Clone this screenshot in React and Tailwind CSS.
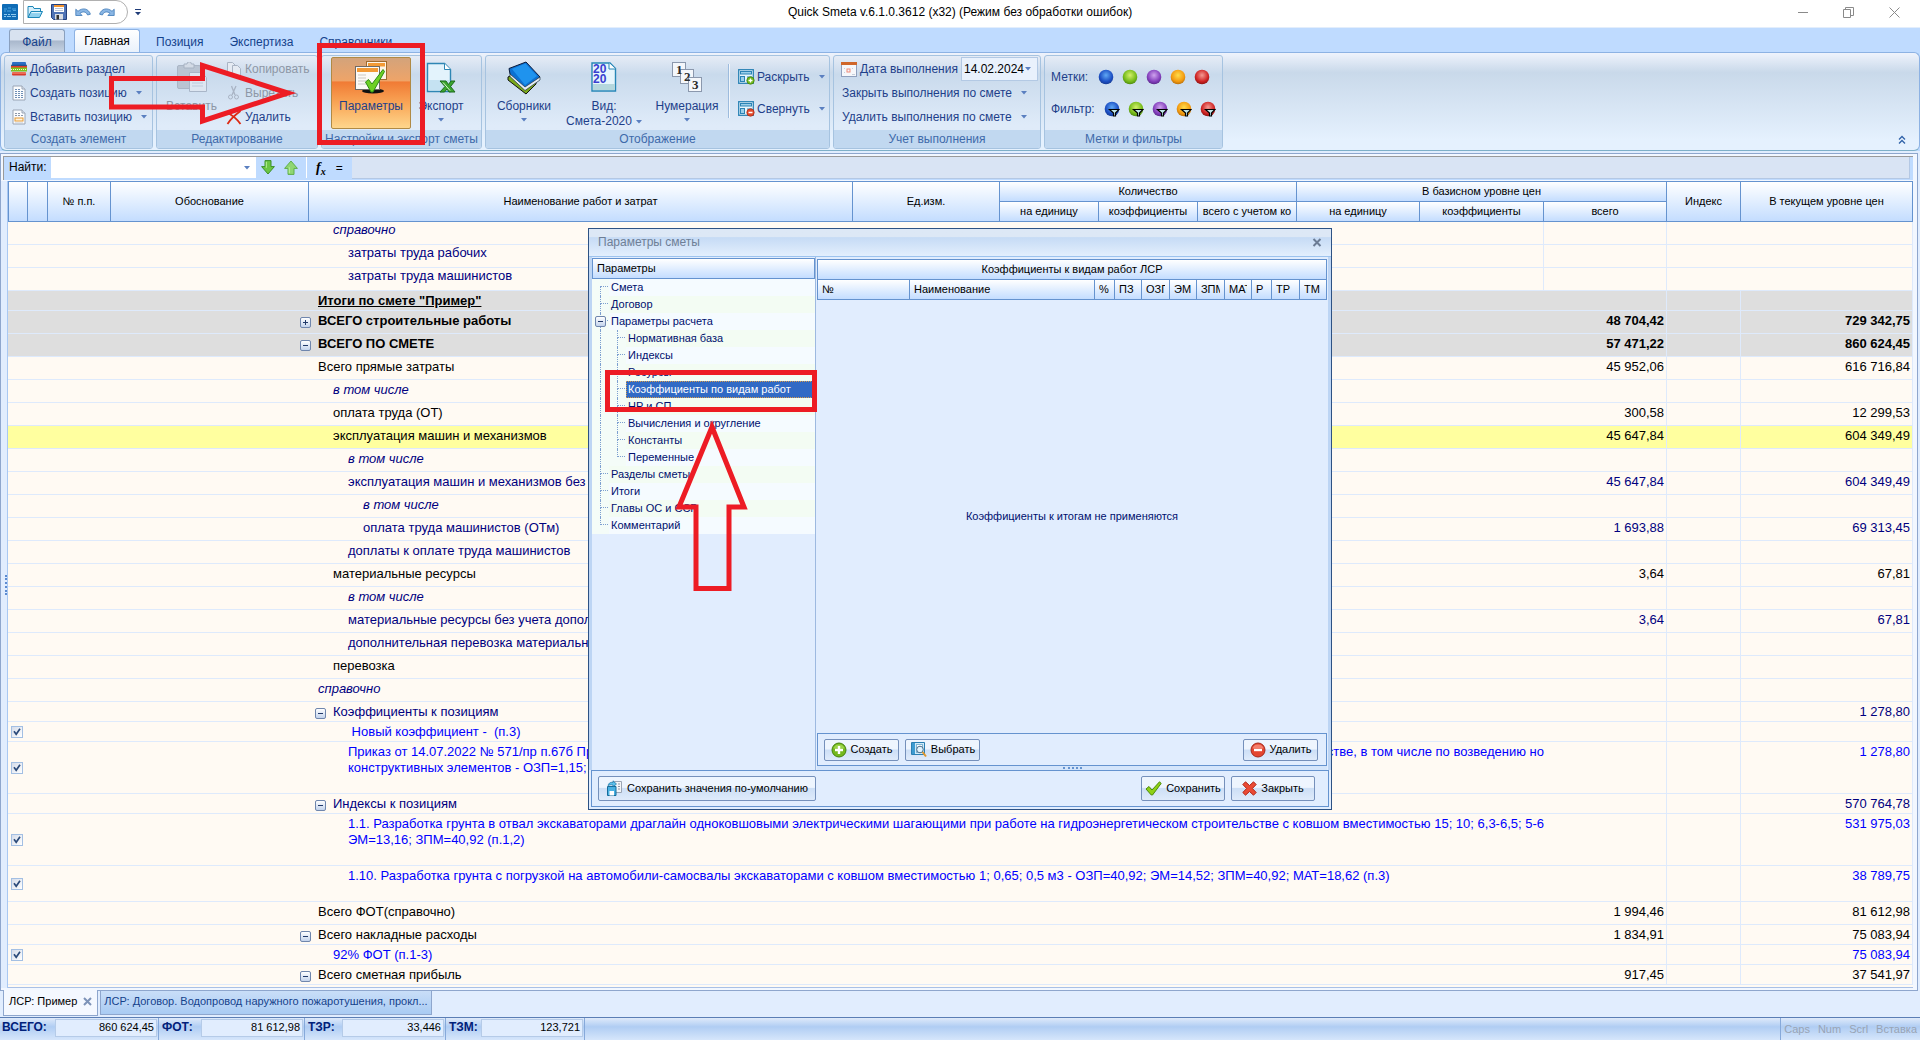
import React from "react";

/* ---------- small shared pieces ---------- */

function Caret({ className = "" }) {
  return (
    <svg width="6" height="4" viewBox="0 0 6 4" className={"shrink-0 " + className} aria-hidden="true">
      <path d="M0 0h6L3 3.4z" fill="#5a7fc0" />
    </svg>
  );
}

function Expander({ open, className = "" }) {
  return (
    <button
      type="button"
      aria-label={open ? "Свернуть строку" : "Развернуть строку"}
      className={"grid size-[11px] shrink-0 place-items-center rounded-[2px] border border-[#6f86ad] bg-linear-to-b from-white to-[#c3d3ec] " + className}
    >
      <svg width="7" height="7" viewBox="0 0 7 7" aria-hidden="true">
        <path d={open ? "M1 3.5h5" : "M1 3.5h5M3.5 1v5"} stroke="#223a6a" strokeWidth="1" />
      </svg>
    </button>
  );
}

function Check({ label }) {
  return (
    <label className="ml-[3px] grid size-3 place-items-center">
      <input
        type="checkbox"
        defaultChecked
        aria-label={label}
        className="col-start-1 row-start-1 size-3 appearance-none border border-[#a3bfe3] bg-linear-to-br from-[#d5dcea] to-white"
      />
      <svg width="8" height="8" viewBox="0 0 8 8" className="pointer-events-none col-start-1 row-start-1" aria-hidden="true">
        <path d="M1 3.2L3.2 6.2L7 .8" fill="none" stroke="#2b4a7a" strokeWidth="1.7" />
      </svg>
    </label>
  );
}

/* ---------- icons ---------- */

const AppIcon = () => (
  <svg width="16" height="16" viewBox="0 0 16 16" aria-hidden="true">
    <rect width="16" height="16" rx="1" fill="#0f6cb6" />
    <path d="M2 5h3M6 4h3M10 5h4M2 7h2M5 7h4M11 6.5h3" stroke="#4ba3df" />
    <path d="M2 10.5h3M6 10.5h2M9 10.5h5M2 12.5h2M5 12.5h4M10 12.5h4" stroke="#8cc8ee" />
  </svg>
);
const FolderIcon = () => (
  <svg width="16" height="16" viewBox="0 0 16 16" aria-hidden="true">
    <path d="M1 13.5V2.5h5l1 2h6.5v3" fill="#d8effb" stroke="#1c87b8" />
    <path d="M1 13.5L4 7.5h11.5l-3 6z" fill="#8fd0ee" stroke="#1c87b8" />
    <path d="M4.6 8.6h9.2" stroke="#e7f7fe" />
  </svg>
);
const SaveIcon = () => (
  <svg width="16" height="16" viewBox="0 0 16 16" aria-hidden="true">
    <path d="M.5.5h15v15h-13l-2-2z" fill="#4f73b5" stroke="#223f7d" />
    <rect x="3" y="1" width="10" height="7" fill="#fff" />
    <rect x="3" y="1" width="10" height="2" fill="#f2932e" />
    <path d="M4 4.500h8M4 6.500h8" stroke="#b9c5d8" />
    <rect x="4" y="10" width="8" height="5.500" fill="#d9dde4" />
    <rect x="5.500" y="11" width="2.500" height="4.500" fill="#333" />
  </svg>
);
const UndoIcon = ({ flip }) => (
  <svg width="16" height="12" viewBox="0 0 16 12" className={flip ? "-scale-x-100" : ""} aria-hidden="true">
    <path d="M.8 3.200v6.300h6.300L5 7.300c2.600-2.200 6.200-1.800 7.600 1.700l2.800-.8C13.600 2.500 7.600 1.200 3 5.300z" fill="#8ab6e4" stroke="#3c78b8" strokeWidth=".8" />
  </svg>
);
const SectionIcon = () => (
  <svg width="16" height="14" viewBox="0 0 16 14" aria-hidden="true">
    <rect x="1" y="0" width="14" height="3.500" rx="1" fill="#2c6fc4" />
    <rect x="0" y="2.800" width="16" height="1" fill="#123d77" />
    <rect x="0" y="4" width="16" height="2" fill="#e23b2d" />
    <rect x="0" y="5.500" width="16" height="4" fill="#7fc21d" />
    <path d="M0 7.500h16" stroke="#f2ffd0" strokeDasharray="1 1" />
    <rect x="1" y="10" width="14" height="3.500" rx="1" fill="#d93b2a" />
    <path d="M1 11h14" stroke="#ff9d84" />
  </svg>
);
const SheetIcon = ({ orange }) => (
  <svg width="14" height="16" viewBox="0 0 14 16" aria-hidden="true">
    <path d="M1 1h9l3 3v11H1z" fill="#fbfcfe" stroke="#9aa5b5" />
    <path d="M10 1v3h3" fill="#dfe6f0" stroke="#9aa5b5" />
    {orange ? (
      <>
        <path d="M3 4.500h6M3 6.500h8" stroke="#8c98aa" strokeDasharray="2 1" />
        <rect x="3" y="9" width="8" height="3" fill="#fff3dd" stroke="#e59a34" />
        <path d="M3 14h8" stroke="#c3cad5" />
      </>
    ) : (
      <path d="M3 4.500h6M3 6.500h8M3 8.500h8M3 10.500h8M3 12.500h8" stroke="#6f8fb5" strokeDasharray="2 1" />
    )}
  </svg>
);
const PasteIcon = () => (
  <svg width="32" height="32" viewBox="0 0 32 32" aria-hidden="true">
    <rect x="1.500" y="3.500" width="23" height="23" rx="1.500" fill="#b9c4d2" stroke="#aab6c6" />
    <path d="M8 2h3a2.200 2.200 0 014.400 0H18v4H8z" fill="#d3dbe6" stroke="#a7b2c2" />
    <path d="M13.500 10.500h12l5 5v14h-17z" fill="#dde6f1" stroke="#a9b6c8" />
    <path d="M16 15h7M16 18h11M16 21h11M16 24h11" stroke="#bccadb" />
  </svg>
);
const CopyIcon = () => (
  <svg width="16" height="16" viewBox="0 0 16 16" aria-hidden="true">
    <path d="M1.500 1.500h5l3 3v7h-8z" fill="#e5ebf3" stroke="#a9b4c4" />
    <path d="M6.500 4.500h5l3 3v7h-8z" fill="#e5ebf3" stroke="#a9b4c4" />
  </svg>
);
const CutIcon = () => (
  <svg width="16" height="16" viewBox="0 0 16 16" fill="none" stroke="#a9b4c4" aria-hidden="true">
    <path d="M5.500 1L9 10M10 1L6 10" strokeWidth="1.300" />
    <circle cx="4.500" cy="12" r="2" />
    <circle cx="10.500" cy="12" r="2" />
  </svg>
);
const DeleteIcon = () => (
  <svg width="16" height="16" viewBox="0 0 16 16" fill="none" stroke="#dd2a13" strokeWidth="1.800" aria-hidden="true">
    <path d="M1 3.500C6 6 11 10 14.500 15M14.500 2C9 6 4.500 10 1.500 15" />
  </svg>
);
const ParamsIcon = () => (
  <svg width="34" height="33" viewBox="0 0 34 33" aria-hidden="true">
    <ellipse cx="19" cy="30" rx="11" ry="2.500" fill="#111" />
    <rect x="12.500" y=".5" width="20" height="18" fill="#fdf4e6" stroke="#a06a2c" />
    <rect x="14" y="2" width="17" height="3.500" fill="#f39a35" />
    <rect x="1.500" y="5.500" width="24" height="23" fill="#fcfaf6" stroke="#6e6a66" />
    <rect x="3" y="7" width="21" height="4" fill="#f39a35" />
    <path d="M4 14h8M4 17h8M4 20h8M4 23h8" stroke="#cbc8c2" />
    <path d="M11.500 21l3-2.500 3.500 4.500L29 8.500l1.500 2L19 31h-2z" fill="#6dd024" stroke="#2c8a14" />
  </svg>
);
const ExportIcon = () => (
  <svg width="30" height="32" viewBox="0 0 30 32" aria-hidden="true">
    <path d="M1.500 1.500h17l6 6v22h-23z" fill="#e3f3fc" stroke="#2f86b4" strokeWidth="1.400" />
    <path d="M18.500 1.500v6h6" fill="#fff" stroke="#2f86b4" />
    <path d="M3 18h20v10H3z" fill="#c5e2f2" />
    <path d="M14 19h6l2.500 3.500L25 19h4l-4.500 5.500L29 30h-6l-2-3-2.500 3H14l5-5.500z" fill="#3ba52f" stroke="#1c6a1c" />
    <path d="M17 20.500l7 8" stroke="#d8f5cf" />
  </svg>
);
const BooksIcon = () => (
  <svg width="34" height="34" viewBox="0 0 34 34" aria-hidden="true">
    <path d="M1 16l4-2 14 13 10-7v3L19 33 1 19z" fill="#7aa81b" stroke="#111" />
    <path d="M2 7.500L19 1l14 15-15 12L3 13z" fill="#0c70d2" stroke="#0a1a3a" />
    <path d="M5 8l13.500-5.500L30 15l-12 9z" fill="#1f93ee" />
    <path d="M3 13l15 13 15-10v3L18 29.500 3 15.500z" fill="#e7edf4" stroke="#234" strokeWidth=".7" />
  </svg>
);
const Doc2020Icon = () => (
  <svg width="26" height="31" viewBox="0 0 26 31" aria-hidden="true">
    <path d="M1 1h18l5.500 5.500V29H1z" fill="#e6f5fc" stroke="#2786b6" strokeWidth="1.400" />
    <path d="M18 1v6h6.500" fill="#fff" stroke="#2786b6" />
    <rect x="2" y="22" width="22" height="6" fill="#b5d7dd" />
    <g fontFamily="Liberation Sans" fontWeight="bold" fontSize="12" fill="#3a3fd0">
      <text x="2" y="11">20</text>
      <text x="2" y="21">20</text>
    </g>
  </svg>
);
const NumberingIcon = () => (
  <svg width="31" height="31" viewBox="0 0 31 31" aria-hidden="true">
    <g fill="#f4f7fb" stroke="#8b98ad">
      <rect x=".5" y=".5" width="13" height="14" />
      <rect x="8.500" y="7.500" width="13" height="14" />
      <rect x="16.500" y="15.500" width="13" height="14" />
    </g>
    <g fontFamily="Liberation Serif" fontWeight="bold" fontSize="13" fill="#2b2b2b">
      <text x="4" y="12">1</text>
      <text x="12" y="19">2</text>
      <text x="20" y="27">3</text>
    </g>
  </svg>
);
const OutlineIcon = ({ plus }) => (
  <svg width="17" height="16" viewBox="0 0 17 16" aria-hidden="true">
    <rect x=".7" y=".7" width="14.600" height="13.600" fill="#e8f5fc" stroke="#2b83b5" strokeWidth="1.300" />
    <rect x="2.500" y="2.500" width="11" height="2.500" fill="#9ccfea" stroke="#2b83b5" />
    <rect x="2.500" y="7.500" width="4" height="5" fill="#9ccfea" stroke="#2b83b5" />
    <path d="M9 8h5" stroke="#2b83b5" />
    <circle cx="12.500" cy="11.500" r="3.700" fill={plus ? "#6fb81a" : "#e2492c"} stroke={plus ? "#3f7d0c" : "#a72a14"} strokeWidth=".7" />
    <path d={plus ? "M10.500 11.500h4M12.500 9.500v4" : "M10.500 11.500h4"} stroke="#fff" strokeWidth="1.300" />
  </svg>
);
const CalendarIcon = () => (
  <svg width="16" height="15" viewBox="0 0 16 15" className="shrink-0" aria-hidden="true">
    <rect x=".5" y=".5" width="15" height="14" fill="#f6f8fb" stroke="#8fa0bd" />
    <rect width="16" height="3" fill="#d0672a" />
    <rect x="6" y="7" width="3" height="3" fill="none" stroke="#f08a78" />
    <path d="M3 6.500h1M11 6.500h1M3 10.500h1M11 12.500h3" stroke="#c7cfdb" />
  </svg>
);
const MARKS = [
  ["синяя", "#5fa8f4", "#1c4fc4", "#173c94"],
  ["зелёная", "#d3f06a", "#76bb1a", "#4f8a12"],
  ["фиолетовая", "#cfa3ee", "#8440bd", "#5c2a8c"],
  ["оранжевая", "#ffdc4a", "#f39a10", "#b8700c"],
  ["красная", "#f59a92", "#cf2323", "#8e1414"],
];
function Ball({ mark, filter }) {
  const [name, light, main, edge] = mark;
  const id = "ball-" + edge.slice(1) + (filter ? "f" : "");
  return (
    <button type="button" aria-label={(filter ? "Фильтр: " : "Метка: ") + name} className="grid size-6 place-items-center">
      <svg width="16" height="16" viewBox="0 0 16 16" aria-hidden="true">
        <radialGradient id={id} cx=".5" cy=".38" r=".62">
          <stop offset="0" stopColor={light} />
          <stop offset=".7" stopColor={main} />
          <stop offset="1" stopColor={edge} />
        </radialGradient>
        <circle cx="8" cy="8" r="7.300" fill={"url(#" + id + ")"} />
        {filter && <path d="M5.500 8.500h9.500l-3.500 3.500v3h-2V12z" fill="#bfe6ea" stroke="#000" strokeWidth="1.200" />}
      </svg>
    </button>
  );
}
const GreenArrow = ({ up }) => (
  <svg width="14" height="15" viewBox="0 0 14 15" className={up ? "-scale-y-100" : ""} aria-hidden="true">
    <path d="M4 .6h6v6h3.400L7 14 .6 6.600H4z" fill={up ? "#8fd673" : "#6cc644"} stroke={up ? "#5fae4a" : "#3c8f2a"} />
    <path d="M5.300 1.800v6" stroke="#bdf09b" />
  </svg>
);
const CircleIcon = ({ plus }) => (
  <svg width="16" height="16" viewBox="0 0 16 16" aria-hidden="true">
    <circle cx="8" cy="8" r="7" fill={plus ? "#74b81c" : "#e4452f"} stroke={plus ? "#44820d" : "#a5281a"} />
    <path d="M2.500 6.500a5.600 5 0 0111 0" fill={plus ? "#9bd44a" : "#f4806d"} />
    <path d={plus ? "M4 8h8M8 4v8" : "M4 8h8"} stroke="#fff" strokeWidth="2.400" />
  </svg>
);
const PickIcon = () => (
  <svg width="17" height="17" viewBox="0 0 17 17" aria-hidden="true">
    <path d="M1.500 1.500h13v12h-13z" fill="#cfeaf8" stroke="#2a7fb2" />
    <path d="M2 2h3v11H2z" fill="#3d9bd0" />
    <rect x="6.500" y="3.500" width="6" height="8" fill="#fff" stroke="#7fb6d4" />
    <circle cx="10" cy="8.500" r="3.300" fill="#d9f0fb" fillOpacity=".8" stroke="#4e6f8c" />
    <path d="M12.500 11l3.500 4.500" stroke="#e0962b" strokeWidth="2" />
  </svg>
);
const DefaultsIcon = () => (
  <svg width="17" height="17" viewBox="0 0 17 17" aria-hidden="true">
    <path d="M8.500 1.500h7v11h-7z" fill="#f3f5f8" stroke="#9aa5b5" />
    <path d="M12 4h2M12 6.500h2M12 9h2" stroke="#8c98aa" />
    <path d="M1.500 6.500h8.500v9H1.500z" fill="#4ab1e2" stroke="#156c9c" />
    <rect x="3.500" y="11" width="4.500" height="4.500" fill="#fff" />
    <path d="M2 5.500C3 2.500 5 2 7 2.500V.8L10.500 4 7 7V5C5 4.600 3.500 5 2 5.500z" fill="#5bc0ec" stroke="#156c9c" strokeWidth=".7" />
  </svg>
);
const TickIcon = () => (
  <svg width="17" height="15" viewBox="0 0 17 15" aria-hidden="true">
    <path d="M1 8l3-2.500 3 3.500L14.500.8l1.700 1.600L7.500 14H6.300z" fill="#8fd117" stroke="#4c8a0b" />
  </svg>
);
const CrossIcon = () => (
  <svg width="15" height="15" viewBox="0 0 15 15" aria-hidden="true">
    <path d="M3.500.8L7.500 4.500 11.500.8l2.700 2.700-3.800 4 3.800 4-2.700 2.700-4-3.700-4 3.700L.8 11.500l3.800-4-3.800-4z" fill="#ea4a35" stroke="#b02a1a" />
  </svg>
);

/* ---------- ribbon ---------- */

function Group({ title, className, children }) {
  return (
    <section className={"flex shrink-0 flex-col overflow-hidden rounded-[3px] border border-[#a6c3e0] bg-linear-to-b from-[#e6ecf6] from-0% via-[#c9daec] via-20% to-[#dfebf9] to-75% " + className}>
      <div className="flex h-[74px]">{children}</div>
      <h2 className="h-[18px] bg-[#c1d8f0] text-center leading-[18px] whitespace-nowrap text-[#3e6aaa]">{title}</h2>
    </section>
  );
}

function SmallButton({ icon, caret, disabled, children, className = "" }) {
  return (
    <button type="button" disabled={disabled} className={"flex h-6 items-center gap-[3px] whitespace-nowrap disabled:text-[#8d97a6] " + className}>
      {icon && <span className="grid w-4 place-items-center">{icon}</span>}
      {children}
      {caret && <Caret className="ml-[6px]" />}
    </button>
  );
}

function BigButton({ icon, caret, label, sub, disabled, className, pad = "pt-1" }) {
  return (
    <button type="button" disabled={disabled} className={"flex flex-col items-center leading-[15px] whitespace-nowrap disabled:text-[#8d97a6] " + pad + " " + className}>
      <span className="grid h-[35px] place-items-center">{icon}</span>
      <span className="mt-1">{label}</span>
      {sub && (
        <span className="flex items-center gap-1">
          {sub}
          <Caret />
        </span>
      )}
      {caret && <Caret className="mt-1" />}
    </button>
  );
}

function Ribbon() {
  return (
    <div className="bg-[#bfdbff]">
      <nav className="flex h-6 items-end pl-[9px] text-[#15428b]">
        <button type="button" className="mr-[9px] h-[23px] w-14 rounded-t-[3px] border border-b-0 border-[#8aa0be] bg-linear-to-b from-[#d8e2f0] from-45% via-[#a9b8cc] via-50% to-[#c6d3e4] pt-[2px]">Файл</button>
        <button type="button" className="h-[23px] w-[66px] rounded-t-[3px] border border-b-0 border-[#8db2e3] bg-linear-to-b from-white to-[#e9f1fb] text-black">Главная</button>
        <button type="button" className="h-5 pr-3 pl-4">Позиция</button>
        <button type="button" className="h-5 pr-3 pl-[14px]">Экспертиза</button>
        <button type="button" className="h-5 pr-3 pl-[14px]">Справочники</button>
      </nav>
      <div className="flex h-[99px] items-start gap-[3px] rounded-md border border-[#8db2e3] border-b-[#7fb0c8] bg-linear-to-b from-[#eff3fc] from-0% via-[#c9d9ea] via-20% to-[#e5f1fe] to-90% pt-[2px] pl-[3px] text-[#1e3f8a]">
        <Group title="Создать элемент" className="w-[149px]">
          <div className="flex flex-col pt-[1px] pl-[6px]">
            <SmallButton icon={<SectionIcon />}>Добавить раздел</SmallButton>
            <SmallButton icon={<SheetIcon />} caret>Создать позицию</SmallButton>
            <SmallButton icon={<SheetIcon orange />} caret>Вставить позицию</SmallButton>
          </div>
        </Group>
        <Group title="Редактирование" className="w-[162px]">
          <BigButton disabled icon={<PasteIcon />} label="Вставить" className="w-[69px]" />
          <div className="flex flex-col pt-[1px]">
            <SmallButton disabled icon={<CopyIcon />}>Копировать</SmallButton>
            <SmallButton disabled icon={<CutIcon />}>Вырезать</SmallButton>
            <SmallButton icon={<DeleteIcon />}>Удалить</SmallButton>
          </div>
        </Group>
        <Group title="Настройки и экспорт сметы" className="w-[161px]">
          <BigButton icon={<ParamsIcon />} label="Параметры" pad="pt-[2px]" className="mt-[1px] ml-[9px] h-[72px] w-20 rounded-[2px] border border-[#b08a45] bg-[linear-gradient(#d3a37b_0%,#efa468_33%,#f07a34_34%,#f9a657_65%,#fed68c_100%)]" />
          <BigButton caret icon={<ExportIcon />} label="Экспорт" className="w-[60px]" />
        </Group>
        <Group title="Отображение" className="w-[345px]">
          <BigButton caret icon={<BooksIcon />} label="Сборники" className="w-[76px]" />
          <BigButton icon={<Doc2020Icon />} label="Вид:" sub="Смета-2020" className="w-[84px]" />
          <BigButton caret icon={<NumberingIcon />} label="Нумерация" className="w-[82px]" />
          <div className="mt-2 h-[54px] border-r border-white/70 border-l border-l-[#9dbbdd]" />
          <div className="flex flex-col gap-2 pt-[9px] pl-2">
            <SmallButton caret icon={<OutlineIcon plus />}>Раскрыть</SmallButton>
            <SmallButton caret icon={<OutlineIcon />}>Свернуть</SmallButton>
          </div>
        </Group>
        <Group title="Учет выполнения" className="w-[208px]">
          <div className="flex flex-col pt-[1px] pl-2">
            <div className="-ml-[1px] flex h-6 items-center gap-[3px] whitespace-nowrap">
              <CalendarIcon />
              <label htmlFor="done-date">Дата выполнения</label>
              <span className="flex h-6 w-[77px] items-center border border-[#b3c9e4] bg-[#e9f1fc] pr-[6px] text-black">
                <input id="done-date" defaultValue="14.02.2024" className="w-full min-w-0 bg-transparent pl-[2px] outline-none" />
                <Caret />
              </span>
            </div>
            <SmallButton caret>Закрыть выполнения по смете</SmallButton>
            <SmallButton caret>Удалить выполнения по смете</SmallButton>
          </div>
        </Group>
        <Group title="Метки и фильтры" className="w-[179px]">
          <div className="flex flex-col gap-2 pt-[9px] pl-[6px]">
            <div className="flex h-6 items-center">
              <span className="w-[43px]">Метки:</span>
              {MARKS.map((m) => <Ball key={m[0]} mark={m} />)}
            </div>
            <div className="flex h-6 items-center">
              <span className="w-[49px]">Фильтр:</span>
              {MARKS.map((m) => <Ball key={m[0]} mark={m} filter />)}
            </div>
          </div>
        </Group>
        <button type="button" aria-label="Свернуть ленту" className="mt-auto mr-[13px] mb-[5px] ml-auto">
          <svg width="8" height="10" viewBox="0 0 8 10" fill="none" stroke="#2f62a8" strokeWidth="1.300" aria-hidden="true">
            <path d="M1 4.500L4 1.500l3 3M1 8.500l3-3 3 3" />
          </svg>
        </button>
      </div>
    </div>
  );
}

/* ---------- estimate grid ---------- */

const NAVY = "text-[#00007f]";
const BLUE = "text-[#0000ff]";
const BLACK = "text-black";

const ROWS = [
  { t: "справочно", lvl: 1, c: NAVY, i: 1, top: 1 },
  { t: "затраты труда рабочих", lvl: 2, c: NAVY, top: 1 },
  { t: "затраты труда машинистов", lvl: 2, c: NAVY, top: 1 },
  { t: 'Итоги по смете "Пример"', lvl: 0, c: BLACK, b: 1, u: 1, g: 1, h: 20 },
  { t: "ВСЕГО строительные работы", lvl: 0, c: BLACK, b: 1, g: 1, x: "+", a: "48 704,42", z: "729 342,75" },
  { t: "ВСЕГО ПО СМЕТЕ", lvl: 0, c: BLACK, b: 1, g: 1, x: "-", a: "57 471,22", z: "860 624,45" },
  { t: "Всего прямые затраты", lvl: 0, c: BLACK, a: "45 952,06", z: "616 716,84" },
  { t: "в том числе", lvl: 1, c: NAVY, i: 1 },
  { t: "оплата труда (ОТ)", lvl: 1, c: BLACK, a: "300,58", z: "12 299,53" },
  { t: "эксплуатация машин и механизмов", lvl: 1, c: BLACK, y: 1, a: "45 647,84", z: "604 349,49" },
  { t: "в том числе", lvl: 2, c: NAVY, i: 1 },
  { t: "эксплуатация машин и механизмов без учета доплат", lvl: 2, c: NAVY, a: "45 647,84", z: "604 349,49" },
  { t: "в том числе", lvl: 3, c: NAVY, i: 1 },
  { t: "оплата труда машинистов (ОТм)", lvl: 3, c: NAVY, a: "1 693,88", z: "69 313,45" },
  { t: "доплаты к оплате труда машинистов", lvl: 2, c: NAVY },
  { t: "материальные ресурсы", lvl: 1, c: BLACK, a: "3,64", z: "67,81" },
  { t: "в том числе", lvl: 2, c: NAVY, i: 1 },
  { t: "материальные ресурсы без учета дополнительной перевозки", lvl: 2, c: NAVY, a: "3,64", z: "67,81" },
  { t: "дополнительная перевозка материальных ресурсов", lvl: 2, c: NAVY },
  { t: "перевозка", lvl: 1, c: BLACK },
  { t: "справочно", lvl: 0, c: NAVY, i: 1 },
  { t: "Коэффициенты к позициям", lvl: 1, c: NAVY, x: "-", z: "1 278,80", h: 20 },
  { t: "\u00a0Новый коэффициент -\u00a0 (п.3)", lvl: 2, c: BLUE, k: 1, h: 20 },
  {
    t: [
      "Приказ от 14.07.2022 № 571/пр п.67б Производство работ осуществляется на территории действующего предприятия",
      "конструктивных элементов - ОЗП=1,15; ЭМ=1,15; ЗПМ=1,15 (п.3)",
    ],
    tail: "стве, в том числе по возведению но",
    lvl: 2, c: BLUE, k: 1, z: "1 278,80", h: 52,
  },
  { t: "Индексы к позициям", lvl: 1, c: NAVY, x: "-", z: "570 764,78", h: 20 },
  {
    t: [
      "1.1. Разработка грунта в отвал экскаваторами драглайн одноковшовыми электрическими шагающими при работе на гидроэнергетическом строительстве с ковшом вместимостью 15; 10; 6,3-6,5; 5-6",
      "ЭМ=13,16; ЗПМ=40,92 (п.1,2)",
    ],
    lvl: 2, c: BLUE, k: 1, z: "531 975,03", h: 52,
  },
  { t: "1.10. Разработка грунта с погрузкой на автомобили-самосвалы экскаваторами с ковшом вместимостью 1; 0,65; 0,5 м3 - ОЗП=40,92; ЭМ=14,52; ЗПМ=40,92; МАТ=18,62 (п.3)", lvl: 2, c: BLUE, k: 1, z: "38 789,75", h: 36 },
  { t: "Всего ФОТ(справочно)", lvl: 0, c: BLACK, a: "1 994,46", z: "81 612,98" },
  { t: "Всего накладные расходы", lvl: 0, c: BLACK, x: "-", a: "1 834,91", z: "75 083,94", h: 20 },
  { t: "92% ФОТ (п.1-3)", lvl: 1, c: BLUE, k: 1, z: "75 083,94", h: 20 },
  { t: "Всего сметная прибыль", lvl: 0, c: BLACK, x: "-", a: "917,45", z: "37 541,97", h: 20 },
];

const ROW_H = { 20: "h-5", 23: "h-[23px]", 36: "h-9", 52: "h-[52px]" };
const INDENT = ["pl-[9px]", "pl-[24px]", "pl-[39px]", "pl-[54px]"];
const TH = "overflow-hidden border-r border-b border-[#6593cf] bg-linear-to-b from-white to-[#c4ddff] p-0 font-normal whitespace-nowrap";

function GridRow({ r }) {
  const bg = r.g ? "bg-[#dedede]" : r.y ? "bg-[#ffff9f]" : "";
  const line = "border-b border-[#deeafc] p-0";
  const pt = r.top ? "" : "pt-[2px]";
  const font = (r.b ? "font-bold " : "") + (r.i ? "italic " : "") + (r.u ? "underline " : "");
  const lines = Array.isArray(r.t) ? r.t : [r.t];
  return (
    <tr className={ROW_H[r.h || 23] + " " + bg}>
      <td className={line + " align-middle"}>{r.k ? <Check label={"Учитывать: " + lines[0].trim().slice(0, 24)} /> : null}</td>
      <td className={line} />
      <td className={line} />
      <td className={line} />
      <td colSpan={7} className={line + " align-top leading-4 whitespace-pre " + (r.top ? "border-r " : "") + INDENT[r.lvl] + " " + font + r.c}>
        <div className={"flex " + pt}>
          {r.x && (
            <span className="-ml-[18px] w-[18px] shrink-0 pt-1">
              <Expander open={r.x === "-"} />
            </span>
          )}
          <div className="w-0 min-w-0 flex-1">
            {r.tail ? (
              <>
                <div className="flex justify-between">
                  <span>{lines[0]}</span>
                  <span className="shrink-0">{r.tail}</span>
                </div>
                <div>{lines[1]}</div>
              </>
            ) : (
              lines.map((l) => <div key={l}>{l}</div>)
            )}
          </div>
        </div>
      </td>
      <td className={line + " border-r pr-[2px] text-right align-top leading-4 " + font + r.c}><div className={pt}>{r.a}</div></td>
      <td className={line + (r.top ? "" : " border-r")} />
      <td className={line + " border-r pr-[2px] text-right align-top leading-4 " + font + r.c}><div className={pt}>{r.z}</div></td>
    </tr>
  );
}

function Grid() {
  return (
    <table className="w-full table-fixed border-separate border-spacing-0 bg-[#fffaf3] text-[13px]">
      <colgroup>
        <col className="w-5" />
        <col className="w-5" />
        <col className="w-[63px]" />
        <col className="w-[198px]" />
        <col />
        <col className="w-[147px]" />
        <col className="w-[99px]" />
        <col className="w-[99px]" />
        <col className="w-[99px]" />
        <col className="w-[123px]" />
        <col className="w-[124px]" />
        <col className="w-[123px]" />
        <col className="w-[74px]" />
        <col className="w-[172px]" />
      </colgroup>
      <thead className="text-[11px] leading-[15px] text-black">
        <tr className="h-[21px]">
          <th rowSpan={2} aria-label="Учет" className={TH + " border-t border-l"} />
          <th rowSpan={2} aria-label="Метка" className={TH + " border-t"} />
          <th rowSpan={2} className={TH + " border-t"}>№ п.п.</th>
          <th rowSpan={2} className={TH + " border-t"}>Обоснование</th>
          <th rowSpan={2} className={TH + " border-t"}>Наименование работ и затрат</th>
          <th rowSpan={2} className={TH + " border-t"}>Ед.изм.</th>
          <th colSpan={3} className={TH + " border-t"}>Количество</th>
          <th colSpan={3} className={TH + " border-t"}>В базисном уровне цен</th>
          <th rowSpan={2} className={TH + " border-t"}>Индекс</th>
          <th rowSpan={2} className={TH + " border-t"}>В текущем уровне цен</th>
        </tr>
        <tr className="h-5">
          <th className={TH}>на единицу</th>
          <th className={TH}>коэффициенты</th>
          <th className={TH}>всего с учетом ко</th>
          <th className={TH}>на единицу</th>
          <th className={TH}>коэффициенты</th>
          <th className={TH}>всего</th>
        </tr>
      </thead>
      <tbody>
        {ROWS.map((r, n) => <GridRow key={n} r={r} />)}
      </tbody>
    </table>
  );
}

/* ---------- settings dialog ---------- */

const TREE = [
  ["Смета", 0, "bottom"],
  ["Договор", 0, "full"],
  ["Параметры расчета", 0, "full"],
  ["Нормативная база", 1, "full"],
  ["Индексы", 1, "full"],
  ["Ресурсы", 1, "full"],
  ["Коэффициенты по видам работ", 1, "full"],
  ["НР и СП", 1, "full"],
  ["Вычисления и округление", 1, "full"],
  ["Константы", 1, "full"],
  ["Переменные", 1, "top"],
  ["Разделы сметы", 0, "full"],
  ["Итоги", 0, "full"],
  ["Главы ОС и ССР", 0, "full"],
  ["Комментарий", 0, "top"],
];

function TreeLines({ kind, branch, children }) {
  return (
    <span className="relative block h-[17px] w-[17px] shrink-0 pl-2">
      <span className={"block h-2 w-2 border-dotted border-[#7d9fd0] " + (kind !== "bottom" ? "border-l " : "") + (branch ? "border-b" : "")} />
      <span className={"block h-[9px] w-2 border-dotted border-[#7d9fd0] " + (kind !== "top" ? "border-l" : "")} />
      {children}
    </span>
  );
}

function TreeRow({ item, n }) {
  const [label, level, kind] = item;
  const selected = n === 6;
  const tint = n % 2 ? "bg-[#f3fcf3]" : "bg-[#f5fbff]";
  return (
    <li className="flex h-[17px] bg-[#f4fcf8] leading-[17px] text-[#00106e]">
      {level === 1 && <TreeLines kind="full" />}
      <TreeLines kind={kind} branch>
        {n === 2 && <Expander open className="absolute top-[3px] left-[3px]" />}
      </TreeLines>
      <button type="button" className={"flex-1 text-left whitespace-nowrap " + (selected ? "border border-dotted border-[#d79a4a] bg-[#316ac5] pl-[1px] leading-[15px] text-white" : "pl-[2px] " + tint)}>{label}</button>
    </li>
  );
}

function DialogButton({ icon, children, className }) {
  return (
    <button type="button" className={"flex items-center justify-center gap-1 rounded-[2px] border border-[#7590bb] bg-linear-to-b from-[#eef5fe] from-45% via-[#cddff6] via-50% to-[#dfebfb] whitespace-nowrap " + className}>
      {icon}
      {children}
    </button>
  );
}

const KCOLS = [["№", "w-[92px]"], ["Наименование", ""], ["%", "w-5"], ["ПЗ", "w-[27px]"], ["ОЗП", "w-7"], ["ЭМ", "w-[27px]"], ["ЗПМ", "w-7"], ["МАТ", "w-[27px]"], ["Р", "w-5"], ["ТР", "w-7"], ["ТМ", "w-[27px]"]];

function Dialog() {
  return (
    <div role="dialog" aria-label="Параметры сметы" className="relative flex h-[582px] w-[744px] flex-col border border-[#2d5284] bg-[#e1edfe] text-[11px] text-black">
      <header className="flex h-7 items-center justify-between border-b border-[#9dc3ee] bg-linear-to-b from-[#dde8f6] from-28% via-[#c6dbf5] via-32% to-[#e3effd] px-[9px] pb-[1px] text-[12px] text-[#6e7f96]">
        Параметры сметы
        <button type="button" aria-label="Закрыть окно">
          <svg width="10" height="9" viewBox="0 0 10 9" aria-hidden="true"><path d="M1.500 1l7 7M8.500 1l-7 7" stroke="#6b7c95" strokeWidth="2" /></svg>
        </button>
      </header>
      <div className="flex flex-1 gap-[1px] border-x-[3px] border-[#bdd5f4]">
        <div className="w-[224px] border-r border-[#9db9e0] pt-[1px]">
          <h3 className="h-[21px] border border-[#6593cf] bg-linear-to-b from-white to-[#c4ddff] pl-1 leading-[18px]">Параметры</h3>
          <ul>{TREE.map((it, n) => <TreeRow key={it[0]} item={it} n={n} />)}</ul>
        </div>
        <div className="flex flex-1 flex-col pt-[2px] pr-[1px]">
          <table className="w-full table-fixed border-separate border-spacing-0 border-l border-[#6593cf]">
            <colgroup>{KCOLS.map(([t, w]) => <col key={t} className={w} />)}</colgroup>
            <thead>
              <tr className="h-[21px]"><th colSpan={11} className={TH + " border-t"}>Коэффициенты к видам работ ЛСР</th></tr>
              <tr className="h-5">
                {KCOLS.map(([t]) => (
                  <th key={t} className={TH}><div className="mx-1 overflow-hidden text-left">{t}</div></th>
                ))}
              </tr>
            </thead>
          </table>
          <div className="grid flex-1 place-items-center border-b border-[#6593cf] text-[#00106e]">Коэффициенты к итогам не применяются</div>
          <div className="flex h-[32px] items-center gap-[6px] border-x border-b border-[#6593cf] px-[6px]">
            <DialogButton icon={<CircleIcon plus />} className="h-[22px] w-[75px]">Создать</DialogButton>
            <DialogButton icon={<PickIcon />} className="h-[22px] w-[75px]">Выбрать</DialogButton>
            <DialogButton icon={<CircleIcon />} className="mr-[2px] ml-auto h-[22px] w-[75px]">Удалить</DialogButton>
          </div>
          <div className="grid h-1 place-items-center bg-[#d4e5fb]">
            <span className="h-[2px] w-[19px] border-t-2 border-dotted border-[#6593cf]" />
          </div>
        </div>
      </div>
      <footer className="mx-[2px] mb-[2px] flex h-[37px] items-center gap-[6px] border border-[#6593cf] bg-[#e1edfe] pr-[13px] pl-[6px]">
        <DialogButton icon={<DefaultsIcon />} className="mr-auto h-[25px] w-[218px]">Сохранить значения по-умолчанию</DialogButton>
        <DialogButton icon={<TickIcon />} className="h-[25px] w-[84px]">Сохранить</DialogButton>
        <DialogButton icon={<CrossIcon />} className="h-[25px] w-[84px]">Закрыть</DialogButton>
      </footer>
      <svg className="pointer-events-none absolute top-[140px] left-[14px]" width="214" height="226" viewBox="604 369 214 226" fill="none" stroke="#ed1c24" strokeWidth="5" aria-hidden="true">
        <path d="M608.500 372.500h207v37h-207z" />
        <path d="M713 427L680 507h17v81.500h33V507h15z" />
      </svg>
    </div>
  );
}

/* ---------- page ---------- */

function StatusCell({ label, value, w }) {
  return (
    <label className="flex h-full items-start border-r border-[#86a9da] pt-[1px]">
      <span className={"shrink-0 leading-4 font-bold text-[#00207a] " + w}>{label}</span>
      <output className="mr-[1px] h-[18px] w-[102px] border border-[#b5cbe8] bg-[#e1edfe] pr-[2px] text-right text-[11px] leading-[14px] text-black">{value}</output>
    </label>
  );
}

export default function App() {
  return (
    <div className="relative flex min-h-screen w-full flex-col overflow-hidden bg-[#e1edfe] font-['Liberation_Sans',Arial,sans-serif] text-[12px]">
      <header className="flex h-7 items-start border-b border-[#e3eefc] bg-white">
        <div className="flex flex-1 items-center">
          <span className="ml-[2px]"><AppIcon /></span>
          <div className="ml-[5px] flex h-6 w-[105px] items-center gap-2 rounded-r-full border border-[#b0b0b0] pl-[3px]">
            <button type="button" aria-label="Открыть"><FolderIcon /></button>
            <button type="button" aria-label="Сохранить"><SaveIcon /></button>
            <button type="button" aria-label="Отменить"><UndoIcon /></button>
            <button type="button" aria-label="Вернуть"><UndoIcon flip /></button>
          </div>
          <button type="button" aria-label="Настройка панели" className="ml-[7px]">
            <svg width="6" height="7" viewBox="0 0 6 7" aria-hidden="true"><path d="M0 .5h6" stroke="#1f3c78" /><path d="M0 3h6L3 6.300z" fill="#1f3c78" /></svg>
          </button>
        </div>
        <h1 className="h-6 leading-6 whitespace-nowrap">Quick Smeta v.6.1.0.3612 (x32) (Режим без обработки ошибок)</h1>
        <div className="flex h-6 flex-1 items-center justify-end gap-[35px] text-[#8a8a8a]">
          <button type="button" aria-label="Свернуть окно"><svg width="10" height="10" viewBox="0 0 10 10" aria-hidden="true"><path d="M0 5.500h10" stroke="currentColor" /></svg></button>
          <button type="button" aria-label="Восстановить окно"><svg width="11" height="11" viewBox="0 0 11 11" fill="none" stroke="currentColor" aria-hidden="true"><path d="M.5 2.500h7v8h-7zM2.500 2.500v-2h8v8h-3" /></svg></button>
          <button type="button" aria-label="Закрыть программу" className="mr-5"><svg width="11" height="11" viewBox="0 0 11 11" aria-hidden="true"><path d="M.5.5l10 10M10.500.5l-10 10" stroke="currentColor" /></svg></button>
        </div>
      </header>

      <Ribbon />

      <main className="mt-[2px] mr-[2px] flex flex-1 flex-col border border-[#8ea6cd] bg-[#f2f7ff] pt-[2px] pr-1">
        <div className="ml-[2px] flex h-6 items-stretch border-t border-l border-[#9a9a9a] bg-[#bfdbff]">
          <label htmlFor="find" className="w-[47px] pl-[5px] leading-[21px]">Найти:</label>
          <div className="flex h-[21px] w-[205px] items-center bg-white pr-[6px]">
            <input id="find" className="min-w-0 flex-1 outline-none" />
            <Caret />
          </div>
          <div className="flex h-[21px] items-center gap-[9px] pl-[5px]">
            <button type="button" aria-label="Найти далее"><GreenArrow /></button>
            <button type="button" aria-label="Найти ранее"><GreenArrow up /></button>
          </div>
          <div className="ml-2 flex h-[21px] w-[46px] items-center gap-[10px] border-l border-white pl-[9px] text-black">
            <span className="font-['Liberation_Serif',serif] text-[14px] font-bold italic">f<sub className="text-[10px]">x</sub></span>
            <span>=</span>
          </div>
          <input aria-label="Формула" className="h-[22px] min-w-0 flex-1 border-r border-b border-[#b4c8e4] bg-[#d9e4f4] outline-none" />
          <span className="w-[3px]" />
        </div>
        <div className="flex flex-1 pt-[1px]">
          <div className="flex w-[7px] items-center justify-end border-r border-[#a9c8f2] bg-[#e1edfe]">
            <span className="h-5 border-l-2 border-dotted border-[#5d8bd0]" />
          </div>
          <div className="flex-1 border-b border-[#a9c0e6] bg-[#fffaf3]">
            <Grid />
          </div>
        </div>
        <div className="h-[2px]" />
      </main>

      <div className="flex h-[26px] items-start gap-[2px] pl-[3px] text-[11px]">
        <button type="button" className="-mt-[1px] flex h-[26px] w-[95px] items-center justify-between border border-t-0 border-[#8ea6cd] bg-[#f4f8ff] px-[5px] pb-[2px] whitespace-nowrap">
          ЛСР: Пример
          <svg width="9" height="9" viewBox="0 0 9 9" aria-hidden="true"><path d="M1 1l7 7M8 1L1 8" stroke="#7d93b8" strokeWidth="2" /></svg>
        </button>
        <button type="button" className="h-6 w-[332px] overflow-hidden border border-t-0 border-[#8ea6cd] bg-linear-to-b from-[#c9def8] to-[#a9cbf3] pb-[2px] text-center whitespace-nowrap text-[#15428b]">ЛСР: Договор. Водопровод наружного пожаротушения, прокл...</button>
      </div>

      <footer className="flex h-[23px] border-t border-[#5b7eb5] bg-linear-to-b from-[#dfeafa] from-0% via-[#b0cdf3] via-40% to-[#d6e6fb]">
        <StatusCell label="ВСЕГО:" value="860 624,45" w="w-[55px] pl-[2px]" />
        <StatusCell label="ФОТ:" value="81 612,98" w="w-[42px] pl-[3px]" />
        <StatusCell label="ТЗР:" value="33,446" w="w-[37px] pl-[3px]" />
        <StatusCell label="ТЗМ:" value="123,721" w="w-[35px] pl-[3px]" />
        <div className="ml-auto flex items-center gap-2 border-l border-[#86a9da] pr-[3px] pl-[3px] text-[11px] text-[#98a4b5]">
          <span>Caps</span>
          <span>Num</span>
          <span>Scrl</span>
          <span>Вставка</span>
        </div>
      </footer>

      <div className="pointer-events-none absolute inset-x-0 top-[228px] flex justify-center">
        <div className="pointer-events-auto"><Dialog /></div>
      </div>
      <svg className="pointer-events-none absolute top-10 left-[105px]" width="325" height="110" viewBox="105 40 325 110" fill="none" stroke="#ed1c24" strokeWidth="5" aria-hidden="true">
        <path d="M319.500 45.500h103v97h-103z" />
        <path d="M111.500 78.500h91v-13L288 93l-85.500 28v-14h-91z" />
      </svg>
    </div>
  );
}
